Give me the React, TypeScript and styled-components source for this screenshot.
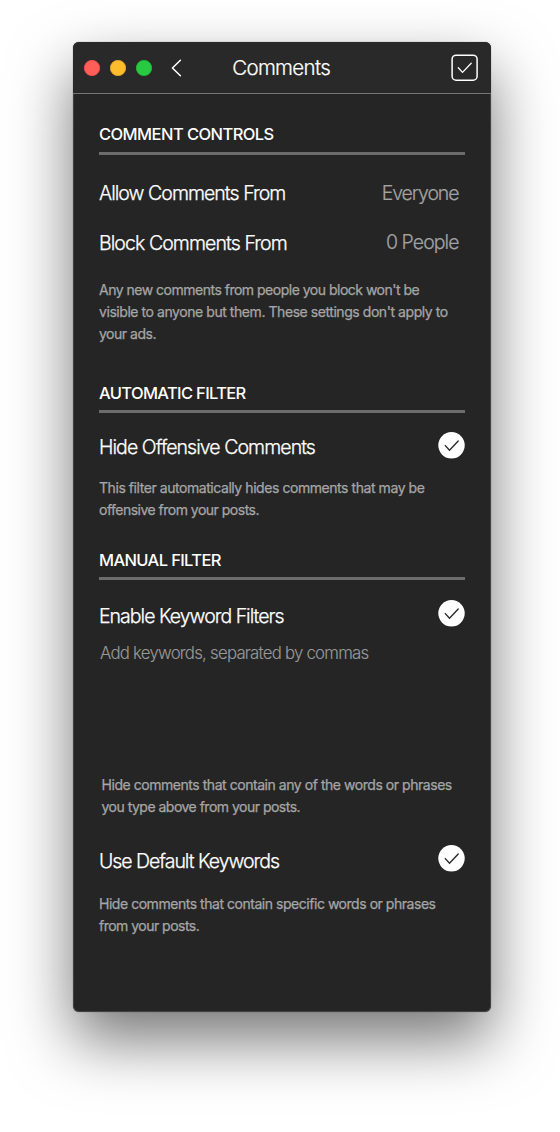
import React from "react";
import styled, { createGlobalStyle } from "styled-components";

const GlobalStyle = createGlobalStyle`
  * { box-sizing: border-box; }
  body {
    margin: 0;
    background: #fff;
    font-family: Inter, "Liberation Sans", sans-serif;
    overflow: hidden;
  }
  h1, h2, p { margin: 0; }
`;

const Desktop = styled.div`
  width: 560px;
  height: 1132px;
  padding: 42px 69px 0 73px;
  overflow: hidden;
`;

const Window = styled.main`
  height: 970px;
  border-radius: 6px;
  background: #252525;
  box-shadow: 0 0 1px rgba(0, 0, 0, 0.6), inset 0 0 0 1px rgba(255, 255, 255, 0.13),
    0 28px 62px rgba(0, 0, 0, 0.54);
`;

const TitleBar = styled.header`
  display: flex;
  align-items: center;
  height: 52px;
  padding: 0 13px 0 11px;
  border-bottom: 1px solid #757575;
  border-radius: 6px 6px 0 0;
  background: #292929;
`;

const TrafficLights = styled.div`
  display: flex;
  gap: 10.5px;
  margin-top: 1px;
`;

const Light = styled.span<{ $fill: string; $edge: string }>`
  width: 15.5px;
  height: 15.5px;
  border-radius: 50%;
  background: ${(p) => p.$fill};
  border: 1px solid ${(p) => p.$edge};
`;

const BackButton = styled.button`
  display: flex;
  margin: 1px 0 0 18px;
  padding: 0;
  border: 0;
  background: none;
`;

const Title = styled.h1`
  margin: 1px 0 0 48.7px;
  color: #fff;
  font-size: 20.5px;
  font-weight: 300;
  line-height: 24px;
  letter-spacing: -0.68px;
  white-space: nowrap;
  -webkit-text-stroke: 0.2px currentColor;
`;

const DoneButton = styled.button`
  display: flex;
  margin-left: auto;
  padding: 0;
  border: 0;
  background: none;
`;

const Content = styled.div`
  padding: 30px 26px 0;
`;

const Heading = styled.h2<{ $top?: number; $track: number; $rise?: number }>`
  margin-top: ${(p) => p.$top ?? 0}px;
  padding: ${(p) => 1 - (p.$rise ?? 0)}px 0 ${(p) => 7 + (p.$rise ?? 0)}px;
  border-bottom: 3px solid #6c6c6c;
  color: #fff;
  font-size: 16.5px;
  font-weight: 500;
  line-height: 20px;
  letter-spacing: ${(p) => p.$track}px;
  white-space: nowrap;
`;

const Row = styled.div<{ $top: number }>`
  display: flex;
  justify-content: space-between;
  height: 27px;
  margin-top: ${(p) => p.$top}px;
`;

const Label = styled.span<{ $track: number; $drop?: number }>`
  padding-top: ${(p) => p.$drop ?? 3}px;
  color: #fff;
  font-size: 19.5px;
  font-weight: 300;
  line-height: 24px;
  letter-spacing: ${(p) => p.$track}px;
  white-space: nowrap;
  -webkit-text-stroke: 0.25px currentColor;
`;

const Value = styled.span<{ $track: number }>`
  padding: 3px 6.5px 0 0;
  color: #a3a3a3;
  font-size: 19.5px;
  font-weight: 300;
  line-height: 24px;
  letter-spacing: ${(p) => p.$track}px;
  white-space: nowrap;
  -webkit-text-stroke: 0.2px currentColor;
`;

const Note = styled.p<{ $top: number; $indent?: number }>`
  margin-top: ${(p) => p.$top}px;
  padding-left: ${(p) => p.$indent ?? 0}px;
  color: #a6a6a6;
  font-size: 14px;
  font-weight: 400;
  line-height: 22.2px;
  white-space: nowrap;
  -webkit-text-stroke: 0.25px currentColor;
`;

const NoteLine = styled.span<{ $track: number }>`
  display: block;
  letter-spacing: ${(p) => p.$track}px;
`;

const KeywordField = styled.div`
  height: 114px;
  margin-top: 15px;
  padding-left: 1px;
  color: #999;
  font-size: 16.8px;
  font-weight: 300;
  line-height: 22px;
  letter-spacing: -0.76px;
  white-space: nowrap;
  -webkit-text-stroke: 0.1px currentColor;
`;

const CheckToggle = () => (
  <svg width="27" height="27" viewBox="0 0 27 27" fill="none">
    <circle cx="13.5" cy="13.3" r="13.2" fill="#fff" />
    <path d="M7.3 13.6 11.5 18.2 20.2 9" stroke="#292929" strokeWidth="1.4" strokeLinecap="round" />
  </svg>
);

export default function App() {
  return (
    <Desktop>
      <GlobalStyle />
      <Window>
        <TitleBar>
          <TrafficLights>
            <Light $fill="#ff5f58" $edge="#f4554f" />
            <Light $fill="#ffbd2e" $edge="#f0ae2a" />
            <Light $fill="#28ca41" $edge="#25bb3b" />
          </TrafficLights>
          <BackButton aria-label="Back">
            <svg width="14" height="18" viewBox="0 0 14 18" fill="none">
              <path d="M10.4 1.2 2.4 9l8 7.8" stroke="#fff" strokeWidth="1.5" strokeLinecap="round" strokeLinejoin="round" />
            </svg>
          </BackButton>
          <Title>Comments</Title>
          <DoneButton aria-label="Done">
            <svg width="27" height="27" viewBox="0 0 27 27" fill="none">
              <rect x="1.1" y="1.2" width="25" height="25" rx="4" stroke="#fff" strokeWidth="1.5" />
              <path d="M7.3 13.8 11.5 18.4 20.2 9.2" stroke="#fff" strokeWidth="1.3" strokeLinecap="round" />
            </svg>
          </DoneButton>
        </TitleBar>
        <Content>
          <Heading $track={-0.57} $rise={1}>COMMENT CONTROLS</Heading>
          <Row $top={23}>
            <Label $track={-0.96}>Allow Comments From</Label>
            <Value $track={-1.08}>Everyone</Value>
          </Row>
          <Row $top={22}>
            <Label $track={-0.92} $drop={4}>Block Comments From</Label>
            <Value $track={-0.95}>0 People</Value>
          </Row>
          <Note $top={24.6}>
            <NoteLine $track={-0.5}>Any new comments from people you block won't be</NoteLine>
            <NoteLine $track={-0.44}>visible to anyone but them. These settings don't apply to</NoteLine>
            <NoteLine $track={-0.48}>your ads.</NoteLine>
          </Note>
          <Heading $top={36.4} $track={-0.65}>AUTOMATIC FILTER</Heading>
          <Row $top={19}>
            <Label $track={-0.94}>Hide Offensive Comments</Label>
            <CheckToggle />
          </Row>
          <Note $top={18}>
            <NoteLine $track={-0.44}>This filter automatically hides comments that may be</NoteLine>
            <NoteLine $track={-0.51}>offensive from your posts.</NoteLine>
          </Note>
          <Heading $top={28} $track={-0.63}>MANUAL FILTER</Heading>
          <Row $top={20}>
            <Label $track={-0.99} $drop={4}>Enable Keyword Filters</Label>
            <CheckToggle />
          </Row>
          <KeywordField>Add keywords, separated by commas</KeywordField>
          <Note $top={18} $indent={2.5}>
            <NoteLine $track={-0.455}>Hide comments that contain any of the words or phrases</NoteLine>
            <NoteLine $track={-0.51}>you type above from your posts.</NoteLine>
          </Note>
          <Row $top={27}>
            <Label $track={-1.03} $drop={4}>Use Default Keywords</Label>
            <CheckToggle />
          </Row>
          <Note $top={20.6}>
            <NoteLine $track={-0.465}>Hide comments that contain specific words or phrases</NoteLine>
            <NoteLine $track={-0.52}>from your posts.</NoteLine>
          </Note>
        </Content>
      </Window>
    </Desktop>
  );
}
